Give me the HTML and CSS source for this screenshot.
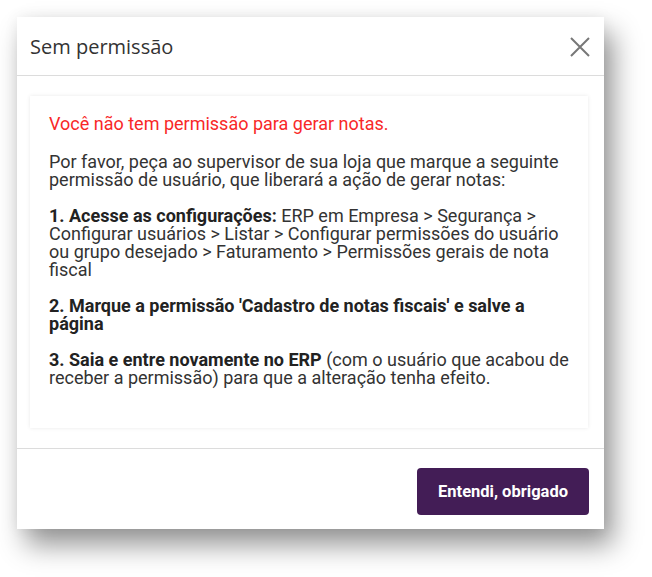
FILE: index.html
```html
<!DOCTYPE html>
<html lang="pt-BR">
<head>
<meta charset="utf-8">
<title>Sem permissão</title>
<link rel="stylesheet" href="styles.css">
</head>
<body>
<div class="stage">
  <div class="dialog">
    <div class="dialog-header">
      <h1 class="dialog-title">Sem permissão</h1>
      <button class="close-btn" aria-label="Fechar">
        <svg width="20" height="20" viewBox="0 0 20 20"><path d="M1 1 L19 19 M19 1 L1 19" stroke="#777" stroke-width="2" fill="none"/></svg>
      </button>
    </div>
    <div class="dialog-body">
      <div class="card">
        <p class="warn">Você não tem permissão para gerar notas.</p>
        <p>Por favor, peça ao supervisor de sua loja que marque a seguinte permissão de usuário, que liberará a ação de gerar notas:</p>
        <p><b>1. Acesse as configurações:</b> ERP em Empresa &gt; Segurança &gt; Configurar usuários &gt; Listar &gt; Configurar permissões do usuário ou grupo desejado &gt; Faturamento &gt; Permissões gerais de nota fiscal</p>
        <p><b>2. Marque a permissão 'Cadastro de notas fiscais' e salve a página</b></p>
        <p><b>3. Saia e entre novamente no ERP</b> (com o usuário que acabou de receber a permissão) para que a alteração tenha efeito.</p>
      </div>
    </div>
    <div class="dialog-footer">
      <button class="primary-btn">Entendi, obrigado</button>
    </div>
  </div>
</div>
</body>
</html>
```

FILE: styles.css
```css
html, body {
  margin: 0;
  padding: 0;
  background: #ffffff;
}

.stage {
  box-sizing: border-box;
  min-height: 577px;
  padding: 17px 0 0 17px;
}

.dialog {
  width: 587px;
  height: 512px;
  background: #ffffff;
  box-shadow: 9px 16px 26px rgba(0, 0, 0, 0.42), 0 0 14px rgba(0, 0, 0, 0.06);
  display: flex;
  flex-direction: column;
  font-family: Roboto, "Liberation Sans", sans-serif;
}

.dialog-header {
  height: 58px;
  border-bottom: 1px solid #dcdcdc;
  display: flex;
  align-items: center;
  justify-content: space-between;
  padding: 0 14px 0 13px;
  flex: none;
}

.dialog-title {
  margin: 0;
  font-family: "Open Sans", "Liberation Sans", sans-serif;
  font-weight: 400;
  font-size: 20px;
  color: #333333;
}

.close-btn {
  border: 0;
  background: transparent;
  padding: 0;
  width: 20px;
  height: 20px;
  display: flex;
  margin-top: 1px;
}

.dialog-body {
  padding: 20px 16px 20px 13px;
  border-bottom: 1px solid #dcdcdc;
  flex: none;
}

.card {
  height: 292px;
  padding: 19px 18px 21px 19px;
  box-shadow: 0 0 4px rgba(0, 0, 0, 0.09);
  font-size: 18px;
  line-height: 18px;
  color: #333333;
}

.card p {
  margin: 0 0 18px;
}

.card b {
  font-weight: 700;
  color: #222222;
}

.card .warn {
  color: #f82828;
  margin-bottom: 20px;
}

.dialog-footer {
  display: flex;
  justify-content: flex-end;
  padding: 19px 15px 15px;
}

.primary-btn {
  height: 47px;
  padding: 0 21px;
  border: 0;
  border-radius: 4px;
  background: #431d56;
  color: #ffffff;
  font-family: Roboto, "Liberation Sans", sans-serif;
  font-weight: 700;
  font-size: 16.5px;
}
```
